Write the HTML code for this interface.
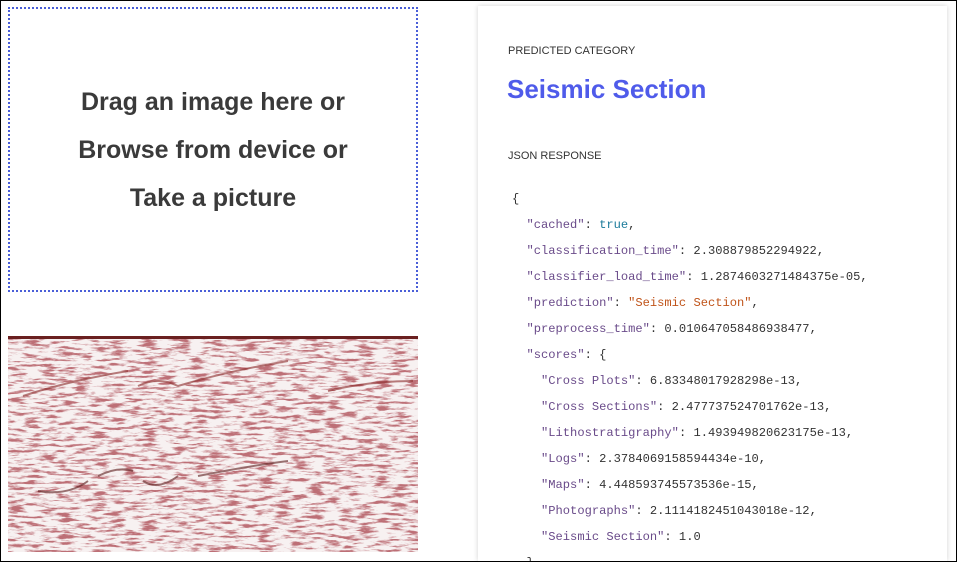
<!DOCTYPE html>
<html><head><style>
html,body{margin:0;padding:0;overflow:hidden;width:957px;height:562px;}
#w{width:955px;height:560px;border:1px solid #000;position:relative;overflow:hidden;background:#fff;font-family:"Liberation Sans",sans-serif;}
.drop{position:absolute;left:7px;top:6px;width:406px;height:281px;border:2px dotted #4a5fd8;}
.drop div{position:absolute;left:0;width:100%;text-align:center;font-weight:bold;font-size:25px;color:#3a3a3a;}
.img{position:absolute;left:7px;top:335px;width:410px;height:216px;}
.card{position:absolute;left:477px;top:5px;width:469px;height:555px;background:#fff;box-shadow:0 0 5px rgba(0,0,0,.18);overflow:hidden;}
.lbl{position:absolute;left:30px;font-size:11px;color:#333;}
.title{position:absolute;left:29px;top:68px;font-size:26px;font-weight:bold;color:#4f5bea;}
pre{position:absolute;left:34px;top:180px;margin:0;font-family:"Liberation Mono",monospace;font-size:12.1px;line-height:26px;color:#333;}
.k{color:#6a4b8a}.b{color:#1a7a9a}.s{color:#c0541a}
</style></head><body><div id="w">
<div class="drop">
<div style="top:79px">Drag an image here or</div>
<div style="top:127px">Browse from device or</div>
<div style="top:175px">Take a picture</div>
</div>
<svg class="img" viewBox="0 0 410 216" preserveAspectRatio="none">
<defs>
<filter id="n" x="0" y="0" width="100%" height="100%">
<feTurbulence type="fractalNoise" baseFrequency="0.06 0.35" numOctaves="4" seed="4"/>
<feColorMatrix type="matrix" values="0 0 0 0 0.45  0 0 0 0 0.1  0 0 0 0 0.12  0 0 0 -5 2.6"/>
</filter>
</defs>
<rect width="410" height="216" fill="#f7f1f1"/>
<rect width="410" height="216" filter="url(#n)" opacity=".85"/>
<rect x="0" y="0" width="410" height="3" fill="#6a2020"/>
<path d="M15 60 Q60 45 120 35 M130 50 Q150 40 170 50 Q220 35 280 25 M320 55 Q360 45 405 45" stroke="#8a2a2a" stroke-width="2" fill="none" opacity=".6"/>
<path d="M30 155 Q60 160 80 145 M90 140 Q110 130 125 135 M135 145 Q150 155 170 140 M190 140 Q240 130 280 125" stroke="#5a1a1a" stroke-width="2" fill="none" opacity=".6"/>
</svg>
<div class="card">
<div class="lbl" style="top:39px">PREDICTED CATEGORY</div>
<div class="title">Seismic Section</div>
<div class="lbl" style="top:144px">JSON RESPONSE</div>
<pre>{
  <span class="k">"cached"</span>: <span class="b">true</span>,
  <span class="k">"classification_time"</span>: 2.308879852294922,
  <span class="k">"classifier_load_time"</span>: 1.2874603271484375e-05,
  <span class="k">"prediction"</span>: <span class="s">"Seismic Section"</span>,
  <span class="k">"preprocess_time"</span>: 0.010647058486938477,
  <span class="k">"scores"</span>: {
    <span class="k">"Cross Plots"</span>: 6.83348017928298e-13,
    <span class="k">"Cross Sections"</span>: 2.477737524701762e-13,
    <span class="k">"Lithostratigraphy"</span>: 1.493949820623175e-13,
    <span class="k">"Logs"</span>: 2.3784069158594434e-10,
    <span class="k">"Maps"</span>: 4.448593745573536e-15,
    <span class="k">"Photographs"</span>: 2.1114182451043018e-12,
    <span class="k">"Seismic Section"</span>: 1.0
  }</pre>
</div>
</div></body></html>
